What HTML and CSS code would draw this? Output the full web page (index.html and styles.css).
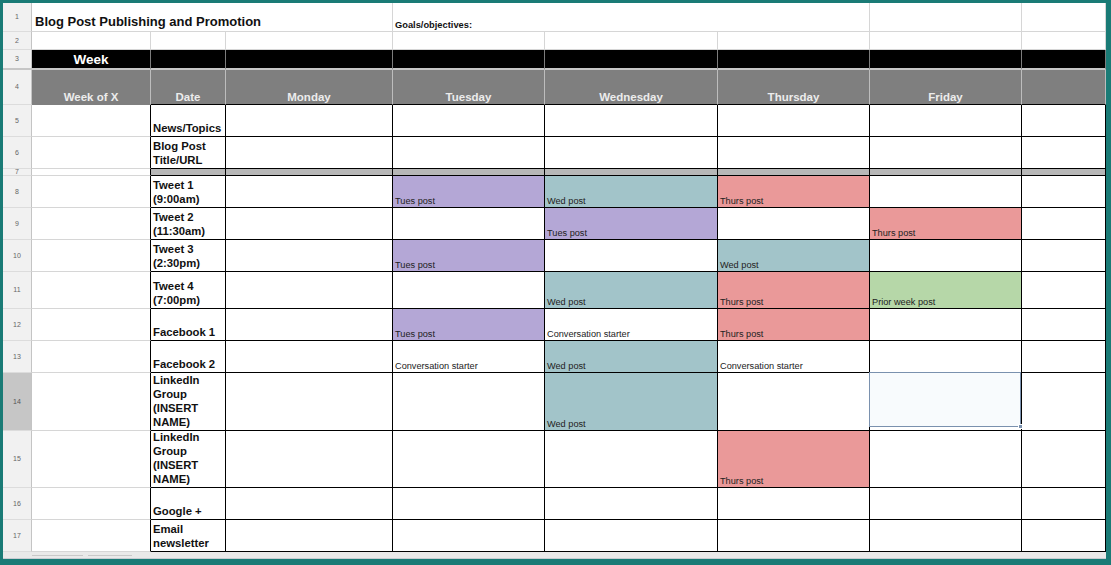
FILE: index.html
```html
<!DOCTYPE html>
<html lang="en">
<head>
<meta charset="utf-8">
<title>Blog Post Publishing and Promotion</title>
<link rel="stylesheet" href="styles.css">
</head>
<body>
<div class="frame">
  <div class="sheet">
    <!-- row 1 -->
    <div class="c rh">1</div>
    <div class="c s3 title">Blog Post Publishing and Promotion</div>
    <div class="c s3 goals">Goals/objectives:</div>
    <div class="c"></div>
    <div class="c"></div>
    <!-- row 2 -->
    <div class="c rh">2</div>
    <div class="c"></div><div class="c"></div><div class="c"></div><div class="c"></div>
    <div class="c"></div><div class="c"></div><div class="c"></div><div class="c"></div>
    <!-- row 3 -->
    <div class="c rh frz">3</div>
    <div class="c blk week">Week</div>
    <div class="c blk"></div><div class="c blk"></div><div class="c blk"></div><div class="c blk"></div>
    <div class="c blk"></div><div class="c blk"></div><div class="c blk"></div>
    <!-- row 4 -->
    <div class="c rh">4</div>
    <div class="c hd">Week of X</div>
    <div class="c hd kb">Date</div>
    <div class="c hd kb">Monday</div>
    <div class="c hd kb">Tuesday</div>
    <div class="c hd kb">Wednesday</div>
    <div class="c hd kb">Thursday</div>
    <div class="c hd kb">Friday</div>
    <div class="c hd kb"></div>
    <!-- row 5 -->
    <div class="c rh">5</div>
    <div class="c ka"></div>
    <div class="c k lb">News/Topics</div>
    <div class="c k"></div><div class="c k"></div><div class="c k"></div><div class="c k"></div><div class="c k"></div><div class="c k"></div>
    <!-- row 6 -->
    <div class="c rh">6</div>
    <div class="c ka"></div>
    <div class="c k lb">Blog Post<br>Title/URL</div>
    <div class="c k"></div><div class="c k"></div><div class="c k"></div><div class="c k"></div><div class="c k"></div><div class="c k"></div>
    <!-- row 7 -->
    <div class="c rh">7</div>
    <div class="c ka"></div>
    <div class="c k gy"></div><div class="c k gy"></div><div class="c k gy"></div><div class="c k gy"></div>
    <div class="c k gy"></div><div class="c k gy"></div><div class="c k gy"></div>
    <!-- row 8 -->
    <div class="c rh">8</div>
    <div class="c ka"></div>
    <div class="c k lb">Tweet 1<br>(9:00am)</div>
    <div class="c k"></div>
    <div class="c k pu">Tues post</div>
    <div class="c k te">Wed post</div>
    <div class="c k re">Thurs post</div>
    <div class="c k"></div><div class="c k"></div>
    <!-- row 9 -->
    <div class="c rh">9</div>
    <div class="c ka"></div>
    <div class="c k lb">Tweet 2<br>(11:30am)</div>
    <div class="c k"></div>
    <div class="c k"></div>
    <div class="c k pu">Tues post</div>
    <div class="c k"></div>
    <div class="c k re">Thurs post</div>
    <div class="c k"></div>
    <!-- row 10 -->
    <div class="c rh">10</div>
    <div class="c ka"></div>
    <div class="c k lb">Tweet 3<br>(2:30pm)</div>
    <div class="c k"></div>
    <div class="c k pu">Tues post</div>
    <div class="c k"></div>
    <div class="c k te">Wed post</div>
    <div class="c k"></div><div class="c k"></div>
    <!-- row 11 -->
    <div class="c rh">11</div>
    <div class="c ka"></div>
    <div class="c k lb">Tweet 4<br>(7:00pm)</div>
    <div class="c k"></div>
    <div class="c k"></div>
    <div class="c k te">Wed post</div>
    <div class="c k re">Thurs post</div>
    <div class="c k gr">Prior week post</div>
    <div class="c k"></div>
    <!-- row 12 -->
    <div class="c rh">12</div>
    <div class="c ka"></div>
    <div class="c k lb">Facebook 1</div>
    <div class="c k"></div>
    <div class="c k pu">Tues post</div>
    <div class="c k">Conversation starter</div>
    <div class="c k re">Thurs post</div>
    <div class="c k"></div><div class="c k"></div>
    <!-- row 13 -->
    <div class="c rh">13</div>
    <div class="c ka"></div>
    <div class="c k lb">Facebook 2</div>
    <div class="c k"></div>
    <div class="c k">Conversation starter</div>
    <div class="c k te">Wed post</div>
    <div class="c k">Conversation starter</div>
    <div class="c k"></div><div class="c k"></div>
    <!-- row 14 -->
    <div class="c rh sel-row">14</div>
    <div class="c ka"></div>
    <div class="c k lb">LinkedIn<br>Group<br>(INSERT<br>NAME)</div>
    <div class="c k"></div>
    <div class="c k"></div>
    <div class="c k te">Wed post</div>
    <div class="c k"></div>
    <div class="c k active"><div class="selbox"><span class="handle"></span></div></div>
    <div class="c k"></div>
    <!-- row 15 -->
    <div class="c rh">15</div>
    <div class="c ka"></div>
    <div class="c k lb">LinkedIn<br>Group<br>(INSERT<br>NAME)</div>
    <div class="c k"></div>
    <div class="c k"></div>
    <div class="c k"></div>
    <div class="c k re">Thurs post</div>
    <div class="c k"></div><div class="c k"></div>
    <!-- row 16 -->
    <div class="c rh">16</div>
    <div class="c ka"></div>
    <div class="c k lb">Google +</div>
    <div class="c k"></div><div class="c k"></div><div class="c k"></div><div class="c k"></div><div class="c k"></div><div class="c k"></div>
    <!-- row 17 -->
    <div class="c rh">17</div>
    <div class="c ka"></div>
    <div class="c k lb">Email<br>newsletter</div>
    <div class="c k"></div><div class="c k"></div><div class="c k"></div><div class="c k"></div><div class="c k"></div><div class="c k"></div>
  </div>
  <div class="strip">
    <span class="tab"></span>
    <span class="tab short"></span>
  </div>
</div>
</body>
</html>
```

FILE: styles.css
```css
* {
  box-sizing: border-box;
  margin: 0;
  padding: 0;
}

body {
  background: #1a7b76;
  font-family: "Liberation Sans", Arial, sans-serif;
}

.frame {
  width: 1111px;
  height: 565px;
  padding: 3px 5px 6px 3px;
  background: #1a7b76;
}

.sheet {
  display: grid;
  grid-template-columns: 29px 119px 75px 167px 152px 173px 152px 152px 84px;
  grid-template-rows: 29px 18px 20px 35px 32px 32px 7px 32px 32px 32px 37px 32px 32px 58px 57px 32px 32px;
  background: #fff;
}

.c {
  display: flex;
  align-items: flex-end;
  min-width: 0;
  overflow: hidden;
  padding: 0 2px;
  border-right: 1px solid #d6d6d6;
  border-bottom: 1px solid #d6d6d6;
  font-size: 9.2px;
  line-height: 11px;
  color: #222;
  white-space: nowrap;
}

.s3 {
  grid-column: span 3;
}

/* row headers */
.rh {
  justify-content: center;
  align-items: center;
  padding: 0;
  background: #f1f1f1;
  border-right-color: #c4c4c4;
  border-bottom-color: #dcdcdc;
  font-size: 7px;
  line-height: 8px;
  color: #666;
}

.rh.sel-row {
  background: #c6c6c6;
  color: #555;
}

.rh.frz {
  border-bottom: 2px solid #c6c6c6;
}

/* row 1 */
.title {
  padding: 0 3px 1px;
  font-size: 13px;
  line-height: 17px;
  font-weight: bold;
  color: #111;
}

.goals {
  padding-bottom: 0;
  font-size: 9.3px;
  font-weight: bold;
  color: #111;
}

/* row 3 (black band) */
.blk {
  background: #000;
  border-right-color: #7c7c7c;
  border-bottom: 2px solid #c6c6c6;
}

.week {
  justify-content: center;
  align-items: center;
  padding-top: 2px;
  font-size: 13.5px;
  line-height: 16px;
  font-weight: bold;
  color: #fff;
}

/* row 4 (grey header) */
.hd {
  justify-content: center;
  background: #7f7f7f;
  border-right-color: #bdbdbd;
  border-bottom-color: #7f7f7f;
  font-size: 11.5px;
  line-height: 13px;
  font-weight: bold;
  color: #ececec;
}

.hd.kb {
  border-bottom-color: #000;
}

/* body cells */
.ka {
  border-right-color: #000;
}

.k {
  border-right-color: #000;
  border-bottom-color: #000;
}

.lb {
  flex-direction: column;
  justify-content: flex-end;
  align-items: flex-start;
  padding: 0 2px 1px;
  font-size: 11.3px;
  line-height: 14px;
  font-weight: bold;
  color: #111;
  white-space: normal;
}

.gy { background: #b7b7b7; }
.pu { background: #b4a7d6; }
.te { background: #a2c4c9; }
.re { background: #ea9999; }
.gr { background: #b6d7a8; }

/* active (selected) cell */
.active {
  position: relative;
  overflow: visible;
}

.selbox {
  position: absolute;
  left: -1px;
  top: -1px;
  width: 152px;
  height: 55px;
  border: 1px solid #7a91ae;
  background: #f8fbfd;
}

.handle {
  position: absolute;
  right: -3px;
  bottom: -3px;
  width: 5px;
  height: 5px;
  background: #7a91ae;
  border: 1px solid #fff;
}

/* bottom sheet-tab strip */
.strip {
  display: flex;
  gap: 5px;
  height: 7px;
  padding-left: 29px;
  background: #e9e9e9;
  border-bottom: 1px solid #c9ccd2;
}

.tab {
  width: 51px;
  margin-top: 3px;
  border-top: 1px solid #c8c8c8;
}

.tab.short {
  width: 44px;
}
```
